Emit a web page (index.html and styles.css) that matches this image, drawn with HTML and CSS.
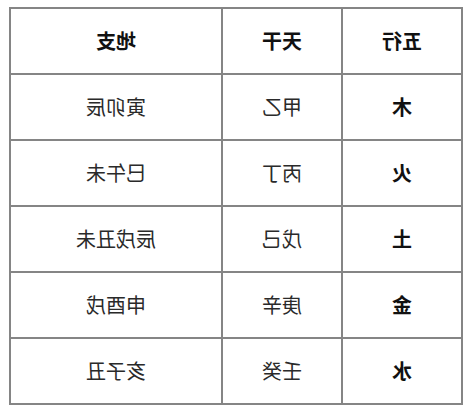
FILE: index.html
```html
<!DOCTYPE html>
<html lang="zh">
<head>
<meta charset="utf-8">
<link rel="stylesheet" href="styles.css">
</head>
<body>
<table class="wx">
  <colgroup>
    <col class="c-narrow">
    <col class="c-narrow">
    <col class="c-wide">
  </colgroup>
  <thead>
    <tr><th>五行</th><th>天干</th><th>地支</th></tr>
  </thead>
  <tbody>
    <tr><th>木</th><td>甲乙</td><td>寅卯辰</td></tr>
    <tr><th>火</th><td>丙丁</td><td>巳午未</td></tr>
    <tr><th>土</th><td>戊己</td><td>辰戌丑未</td></tr>
    <tr><th>金</th><td>庚辛</td><td>申酉戌</td></tr>
    <tr><th>水</th><td>壬癸</td><td>亥子丑</td></tr>
  </tbody>
</table>
</body>
</html>
```
FILE: styles.css
```css
html, body {
  margin: 0;
  padding: 0;
  background: #ffffff;
}
body {
  padding: 7px 0 0 9px;
  font-family: "Noto Sans CJK SC", "Noto Sans", sans-serif;
}
.wx {
  border-collapse: collapse;
  width: 452px;
  table-layout: fixed;
  transform: scaleX(-1);
  border: 2px solid #858585;
}
.c-narrow { width: 120px; }
.c-wide { width: 212px; }
.wx th, .wx td {
  border: 2px solid #858585;
  height: 64px;
  padding: 0;
  text-align: center;
  vertical-align: middle;
  font-size: 20px;
  line-height: 24px;
}
.wx th {
  font-weight: bold;
  color: #111111;
}
.wx td {
  font-weight: normal;
  color: #2a2a2a;
}
```
